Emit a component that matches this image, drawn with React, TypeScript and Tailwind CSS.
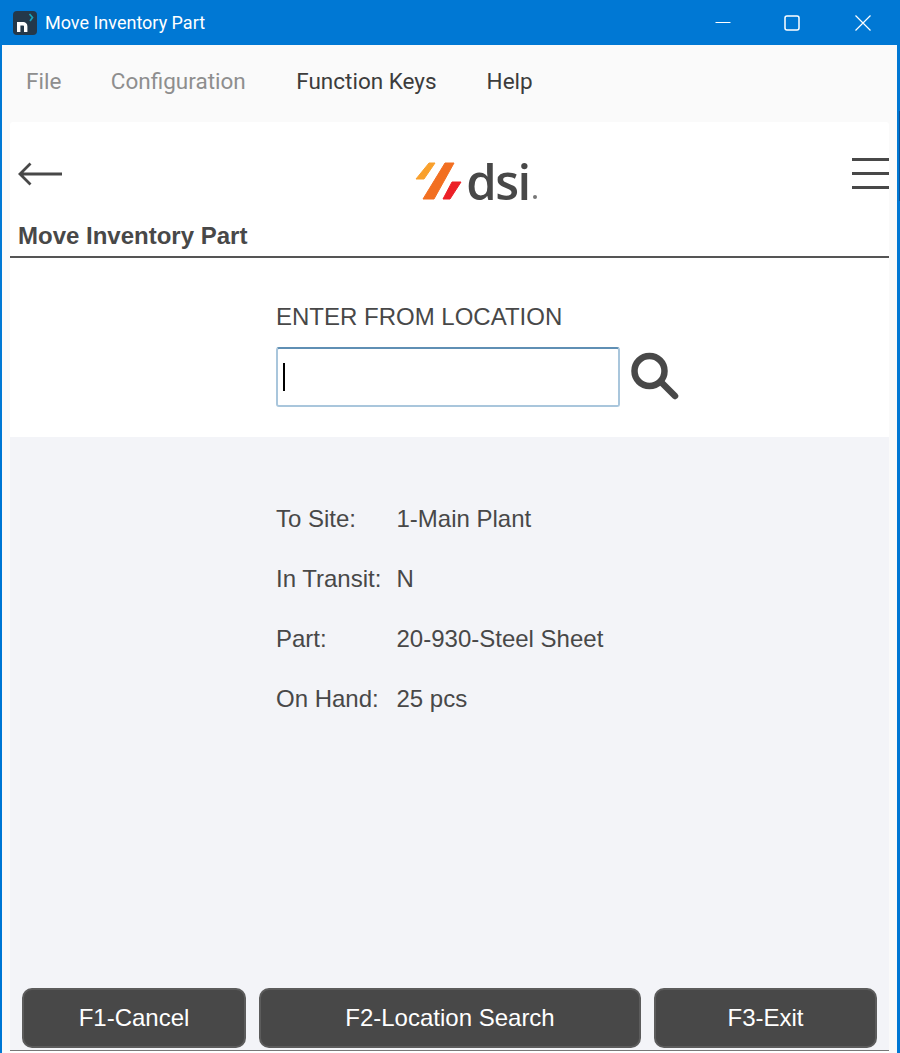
import React from 'react'

const sans = "font-['Liberation_Sans',Arial,sans-serif]"

function Info({ label, value }: { label: string; value: string }) {
  return (
    <div className="flex h-[60px] items-center text-[24px] text-[#484848]">
      <span className="w-[120.5px]">{label}</span>
      <span>{value}</span>
    </div>
  )
}

function ActionButton({ label, className }: { label: string; className: string }) {
  return (
    <button
      className={`h-[60px] rounded-[10px] border-2 border-[#5c5c5c] bg-[#484848] text-[24px] text-white ${className}`}
    >
      {label}
    </button>
  )
}

export default function App() {
  return (
    <div className={`relative flex h-[1053px] w-[900px] flex-col overflow-hidden bg-[#0078d4] ${sans}`}>
      <span className="absolute right-0 top-[111px] h-[90px] w-[1px] bg-[#0a4f94]" />

      {/* Title bar */}
      <div className="flex h-[45px] shrink-0 items-center bg-[#0078d4] pl-[13px] text-white">
        <svg width="24" height="24" viewBox="0 0 24 24">
          <rect width="24" height="24" rx="4" fill="#24384a" />
          <path d="M5.700 21V12.700h4.500a2.500 2.500 0 0 1 2.500 2.500V21" fill="none" stroke="#fff" strokeWidth="3.400" />
          <path d="M16.500 3 19.500 6.500 17 10" fill="none" stroke="#19a5bd" strokeWidth="1.700" />
        </svg>
        <span className="ml-[8px] font-['Roboto',sans-serif] text-[18px]">Move Inventory Part</span>
        <div className="ml-auto flex items-center">
          <svg width="16" height="16" viewBox="0 0 16 16" className="mr-[53px]">
            <path d="M0.500 7.500h15" stroke="#fff" strokeWidth="1" />
          </svg>
          <svg width="16" height="16" viewBox="0 0 16 16" className="mr-[55px]">
            <rect x="1" y="1" width="14" height="14" rx="2" fill="none" stroke="#fff" strokeWidth="1.500" />
          </svg>
          <svg width="16" height="16" viewBox="0 0 16 16" className="mr-[29px]">
            <path d="M0.500 0.500l15 15M15.500 0.500l-15 15" stroke="#fff" strokeWidth="1.200" />
          </svg>
        </div>
      </div>

      <div className="ml-[2px] mr-[3px] flex min-h-0 flex-1 flex-col bg-[#fafafa]">
        {/* Menu bar */}
        <div className="flex h-[77px] shrink-0 items-center pb-[4px] pl-[24px] font-['Roboto',sans-serif] text-[22.500px]">
          <span className="text-[#8e8e8e]">File</span>
          <span className="ml-[49.500px] text-[#8e8e8e]">Configuration</span>
          <span className="ml-[50.500px] text-[#3c3c3c]">Function Keys</span>
          <span className="ml-[50px] text-[#3c3c3c]">Help</span>
        </div>

        <div className="ml-[8px] mr-[8px] flex min-h-0 flex-1 flex-col">
          {/* Header panel */}
          <div className="shrink-0 rounded-t-[3px] bg-white">
            <div className="flex h-[97px] items-start justify-between">
              <svg width="46" height="24" viewBox="0 0 46 24" className="ml-[8px] mt-[40px]">
                <path d="M44 12H2M12.500 1.500 2 12l10.500 10.500" fill="none" stroke="#484848" strokeWidth="2.800" />
              </svg>
              <div className="ml-[36px] mt-[40px] flex items-start">
                <svg width="47" height="38" viewBox="0 0 47 38">
                  <polygon points="1,17 14,1 20,1 9,17" fill="#f9a02c" stroke="#f9a02c" strokeLinejoin="round" />
                  <polygon points="8,37 30,1 39,1 19,37" fill="#f26f21" stroke="#f26f21" strokeLinejoin="round" />
                  <polygon points="28,37 37,20 46,20 35,37" fill="#ec2027" stroke="#ec2027" strokeLinejoin="round" />
                </svg>
                <span className="ml-[4px] -mt-[13px] font-['Open_Sans',sans-serif] text-[49px] leading-[64px] font-semibold tracking-[-1.500px] text-[#484848]">dsi</span>
                <span className="ml-[3px] mt-[33px] h-[4px] w-[4px] rounded-full bg-[#777]" />
              </div>
              <div className="mt-[36px] flex w-[37px] flex-col gap-[11px]">
                <span className="h-[3px] bg-[#484848]" />
                <span className="h-[3px] bg-[#484848]" />
                <span className="h-[3px] bg-[#484848]" />
              </div>
            </div>
            <div className="flex h-[39px] items-center border-b-2 border-[#555] pb-[3px] pl-[8px] text-[24px] leading-none font-bold text-[#484848]">
              Move Inventory Part
            </div>
            {/* Location entry */}
            <div className="h-[179px] pl-[266px] pt-[45px]">
              <div className="text-[24px] leading-[28px] text-[#484848]">ENTER FROM LOCATION</div>
              <div className="mt-[16px] flex items-start">
                <div className="flex h-[60px] w-[344px] items-center rounded-[3px] border-2 border-[#a9c6dc] border-t-[#5f8fb4] bg-white pl-[5px]">
                  <span className="h-[28px] w-[2px] bg-black" />
                </div>
                <svg width="50" height="48" viewBox="0 0 50 48" className="ml-[10px] mt-[5px]">
                  <circle cx="19.500" cy="19" r="15" fill="none" stroke="#484848" strokeWidth="6.500" />
                  <path d="M31 30l14 14" stroke="#484848" strokeWidth="6.500" strokeLinecap="round" />
                </svg>
              </div>
            </div>
          </div>

          {/* Details */}
          <div className="flex min-h-0 flex-1 flex-col bg-[#f3f4f8]">
            <div className="flex-1 pl-[266px] pt-[52px]">
              <Info label="To Site:" value="1-Main Plant" />
              <Info label="In Transit:" value="N" />
              <Info label="Part:" value="20-930-Steel Sheet" />
              <Info label="On Hand:" value="25 pcs" />
            </div>
            <div className="flex shrink-0 gap-[13px] px-[12px] pb-[2px]">
              <ActionButton label="F1-Cancel" className="w-[224px]" />
              <ActionButton label="F2-Location Search" className="w-[382px]" />
              <ActionButton label="F3-Exit" className="w-[223px]" />
            </div>
            <div className="h-[3px] shrink-0 border-t border-[#777] bg-white" />
          </div>
        </div>
      </div>
    </div>
  )
}
